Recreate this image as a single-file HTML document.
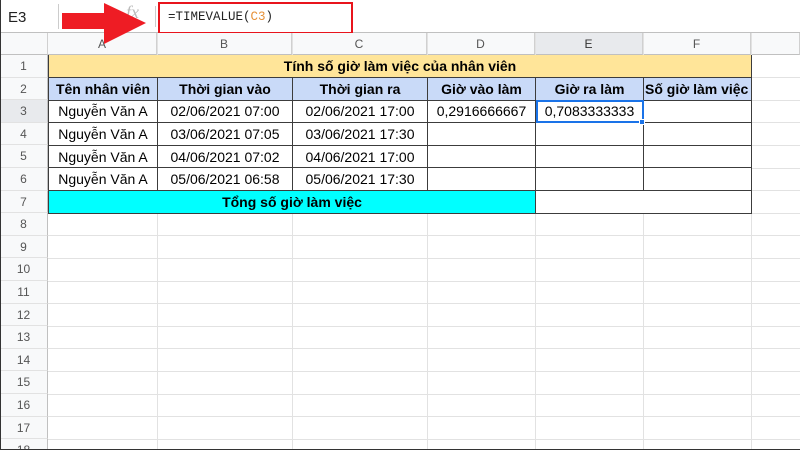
<!DOCTYPE html>
<html><head><meta charset="utf-8"><style>
*{margin:0;padding:0;box-sizing:border-box}
body{width:800px;height:450px;overflow:hidden;background:#fff;font-family:"Liberation Sans",Arial,sans-serif;position:relative}
.a{position:absolute}
.hl{position:absolute;left:0;width:800px;height:1px;background:#e2e2e2}
.vl{position:absolute;top:33px;width:1px;height:417px;background:#e2e2e2}
.rn{position:absolute;left:0;width:48px;text-align:center;font-size:12px;color:#555;background:#f8f9fa;border-right:1px solid #c0c0c0}
.ch{position:absolute;top:33px;height:22px;line-height:22px;text-align:center;font-size:12px;color:#555;background:#f8f9fa;border-right:1px solid #d0d0d0;border-bottom:1px solid #c0c0c0}
table{position:absolute;left:48px;top:55px;border-collapse:collapse;font-size:14px;color:#000}
td{border:1px solid #3c3c3c;height:22.6px;padding:0 4px;white-space:nowrap;overflow:hidden;text-align:center;background:#fff}
</style></head><body>
<div class="a" style="left:0;top:0;width:800px;height:33px;background:#fff;border-bottom:1px solid #c0c0c0"></div>
<div class="a" style="left:8px;top:9px;font-size:15px;color:#222">E3</div>
<div class="a" style="left:58px;top:4px;width:1px;height:25px;background:#ccc"></div>
<div class="a" style="left:126px;top:2px;font-size:18px;font-style:italic;color:#bbb;font-family:'Liberation Serif',serif">fx</div>
<div class="a" style="left:155px;top:6px;width:1px;height:21px;background:#ccc"></div>
<div class="a" style="left:158px;top:2px;width:195px;height:32px;border:2px solid #e8141c"></div>
<div class="a" style="left:168px;top:10px;font-size:12.5px;font-family:'Liberation Mono',monospace;color:#222">=TIMEVALUE(<span style="color:#e69138">C3</span>)</div>
<div class="ch" style="left:0;width:48px"></div>
<div class="ch" style="left:48px;width:109px">A</div>
<div class="ch" style="left:157px;width:135px">B</div>
<div class="ch" style="left:292px;width:135px">C</div>
<div class="ch" style="left:427px;width:108px">D</div>
<div class="ch" style="left:535px;width:108px;background:#e8eaed;color:#333">E</div>
<div class="ch" style="left:643px;width:108px">F</div>
<div class="ch" style="left:751px;width:49px"></div>
<div class="vl" style="left:157px"></div><div class="vl" style="left:292px"></div><div class="vl" style="left:427px"></div><div class="vl" style="left:535px"></div><div class="vl" style="left:643px"></div><div class="vl" style="left:751px"></div>
<div class="hl" style="top:235px"></div><div class="hl" style="top:258px"></div><div class="hl" style="top:281px"></div><div class="hl" style="top:303px"></div><div class="hl" style="top:326px"></div><div class="hl" style="top:348px"></div><div class="hl" style="top:371px"></div><div class="hl" style="top:394px"></div><div class="hl" style="top:416px"></div><div class="hl" style="top:439px"></div>
<div class="hl" style="top:77px;left:751px;width:49px"></div><div class="hl" style="top:100px;left:751px;width:49px"></div><div class="hl" style="top:122px;left:751px;width:49px"></div><div class="hl" style="top:145px;left:751px;width:49px"></div><div class="hl" style="top:168px;left:751px;width:49px"></div><div class="hl" style="top:190px;left:751px;width:49px"></div><div class="hl" style="top:213px;left:751px;width:49px"></div>
<div class="rn" style="top:55px;height:395px"></div>
<div class="rn" style="top:55px;height:23px;line-height:23px;border-bottom:1px solid #e2e2e2">1</div>
<div class="rn" style="top:78px;height:22px;line-height:22px;border-bottom:1px solid #e2e2e2">2</div>
<div class="rn" style="top:100px;height:23px;line-height:23px;background:#e8eaed;border-bottom:1px solid #e2e2e2">3</div>
<div class="rn" style="top:123px;height:22px;line-height:22px;border-bottom:1px solid #e2e2e2">4</div>
<div class="rn" style="top:145px;height:23px;line-height:23px;border-bottom:1px solid #e2e2e2">5</div>
<div class="rn" style="top:168px;height:23px;line-height:23px;border-bottom:1px solid #e2e2e2">6</div>
<div class="rn" style="top:191px;height:22px;line-height:22px;border-bottom:1px solid #e2e2e2">7</div>
<div class="rn" style="top:213px;height:23px;line-height:23px;border-bottom:1px solid #e2e2e2">8</div>
<div class="rn" style="top:236px;height:22px;line-height:22px;border-bottom:1px solid #e2e2e2">9</div>
<div class="rn" style="top:258px;height:23px;line-height:23px;border-bottom:1px solid #e2e2e2">10</div>
<div class="rn" style="top:281px;height:23px;line-height:23px;border-bottom:1px solid #e2e2e2">11</div>
<div class="rn" style="top:304px;height:22px;line-height:22px;border-bottom:1px solid #e2e2e2">12</div>
<div class="rn" style="top:326px;height:23px;line-height:23px;border-bottom:1px solid #e2e2e2">13</div>
<div class="rn" style="top:349px;height:22px;line-height:22px;border-bottom:1px solid #e2e2e2">14</div>
<div class="rn" style="top:371px;height:23px;line-height:23px;border-bottom:1px solid #e2e2e2">15</div>
<div class="rn" style="top:394px;height:23px;line-height:23px;border-bottom:1px solid #e2e2e2">16</div>
<div class="rn" style="top:417px;height:22px;line-height:22px;border-bottom:1px solid #e2e2e2">17</div>
<div class="rn" style="top:439px;height:11px;line-height:22px;overflow:hidden">18</div>
<table>
<colgroup><col style="width:109px"><col style="width:135px"><col style="width:135px"><col style="width:108px"><col style="width:108px"><col style="width:108px"></colgroup>
<tr><td colspan="6" style="background:#ffe599;font-weight:bold;border-top:none">Tính số giờ làm việc của nhân viên</td></tr>
<tr style="font-weight:bold"><td style="background:#c9daf8">Tên nhân viên</td><td style="background:#c9daf8">Thời gian vào</td><td style="background:#c9daf8">Thời gian ra</td><td style="background:#c9daf8">Giờ vào làm</td><td style="background:#c9daf8">Giờ ra làm</td><td style="background:#c9daf8;padding:0 1px;text-align:left">Số giờ làm việc</td></tr>
<tr><td>Nguyễn Văn A</td><td>02/06/2021 07:00</td><td>02/06/2021 17:00</td><td>0,2916666667</td><td style="outline:2px solid #1a73e8;outline-offset:-2px">0,7083333333</td><td></td></tr>
<tr><td>Nguyễn Văn A</td><td>03/06/2021 07:05</td><td>03/06/2021 17:30</td><td></td><td></td><td></td></tr>
<tr><td>Nguyễn Văn A</td><td>04/06/2021 07:02</td><td>04/06/2021 17:00</td><td></td><td></td><td></td></tr>
<tr><td>Nguyễn Văn A</td><td>05/06/2021 06:58</td><td>05/06/2021 17:30</td><td></td><td></td><td></td></tr>
<tr><td colspan="4" style="background:#00ffff;font-weight:bold">Tổng số giờ làm việc</td><td colspan="2"></td></tr>
</table>
<div class="a" style="left:639px;top:119px;width:6px;height:6px;background:#1a73e8;border:1px solid #fff"></div>
<svg class="a" style="left:0;top:0" width="200" height="60"><polygon points="62,13 104,13 104,3 146,23 104,44 104,29 62,29" fill="#ee1c24"/></svg>
<div class="a" style="left:0;top:0;width:800px;height:450px;border-left:1px solid #333;border-bottom:1px solid #333;pointer-events:none"></div>
</body></html>
